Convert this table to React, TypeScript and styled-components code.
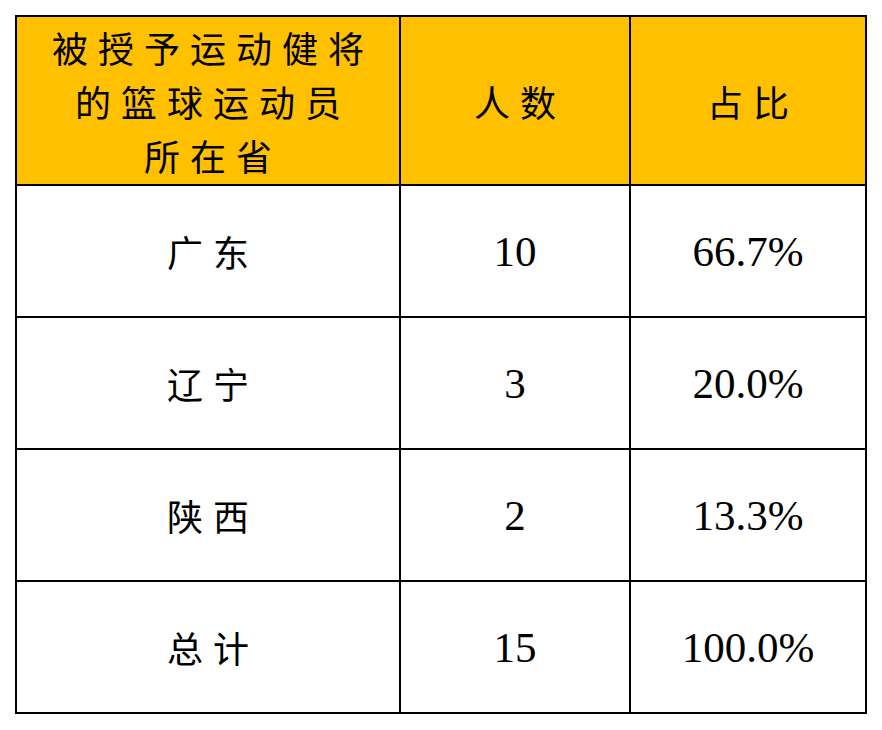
import React from "react";
import styled, { createGlobalStyle } from "styled-components";

const GlobalStyle = createGlobalStyle`
  html, body { margin: 0; padding: 0; background: #ffffff; }
  body { font-family: "Noto Sans CJK SC", "Liberation Serif", serif; color: #000; }
`;

const Page = styled.div`
  padding: 15px 0 0 15px;
`;

const Grid = styled.div`
  display: grid;
  grid-template-columns: 384px 230px 236px;
  grid-template-rows: 169px repeat(4, 132px);
  width: max-content;
  border-top: 2px solid #000;
  border-left: 2px solid #000;
`;

const Cell = styled.div<{ $head?: boolean }>`
  display: flex;
  align-items: center;
  justify-content: center;
  text-align: center;
  border-right: 2px solid #000;
  border-bottom: 2px solid #000;
  background: ${(p) => (p.$head ? "#FFC000" : "#ffffff")};
  box-sizing: border-box;
`;

const Zh = styled.span`
  font-family: "Noto Sans CJK SC", sans-serif;
  font-size: 36px;
  font-weight: 400;
  letter-spacing: 10px;
  padding-left: 10px;
  line-height: 54px;
  color: #000;
`;

const Num = styled.span`
  font-family: "Liberation Serif", serif;
  font-size: 43px;
  color: #000;
`;

const rows = [
  { p: "广东", n: "10", r: "66.7%" },
  { p: "辽宁", n: "3", r: "20.0%" },
  { p: "陕西", n: "2", r: "13.3%" },
  { p: "总计", n: "15", r: "100.0%" },
];

export default function App() {
  return (
    <>
      <GlobalStyle />
      <Page>
        <Grid>
          <Cell $head>
            <Zh>
              被授予运动健将
              <br />
              的篮球运动员
              <br />
              所在省
            </Zh>
          </Cell>
          <Cell $head>
            <Zh>人数</Zh>
          </Cell>
          <Cell $head>
            <Zh>占比</Zh>
          </Cell>
          {rows.map((row) => (
            <React.Fragment key={row.p}>
              <Cell>
                <Zh>{row.p}</Zh>
              </Cell>
              <Cell>
                <Num>{row.n}</Num>
              </Cell>
              <Cell>
                <Num>{row.r}</Num>
              </Cell>
            </React.Fragment>
          ))}
        </Grid>
      </Page>
    </>
  );
}
